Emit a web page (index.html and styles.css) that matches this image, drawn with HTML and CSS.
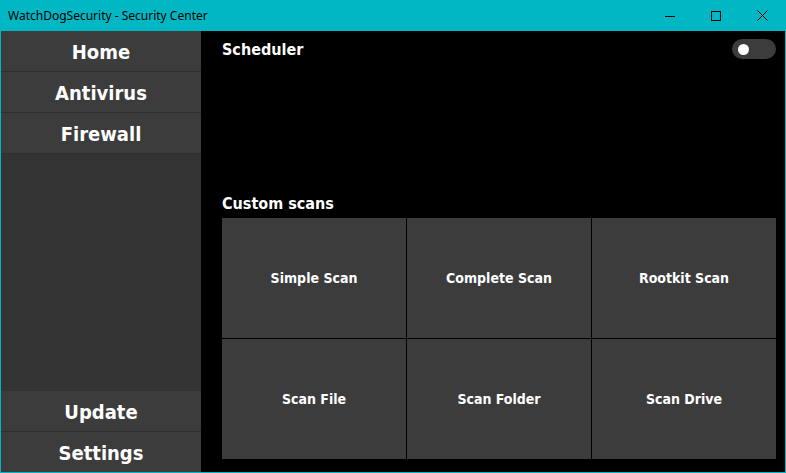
FILE: index.html
```html
<!DOCTYPE html>
<html>
<head>
<meta charset="utf-8">
<link rel="stylesheet" href="styles.css">
</head>
<body>
<div class="window">
  <div class="titlebar">
    <span class="title">WatchDogSecurity - Security Center</span>
    <div class="controls">
      <span class="ctl"><svg width="10" height="10" viewBox="0 0 10 10"><path d="M0 5.5H10" stroke="#000" stroke-width="1"/></svg></span>
      <span class="ctl"><svg width="10" height="10" viewBox="0 0 10 10"><rect x="0.5" y="0.5" width="9" height="9" fill="none" stroke="#000" stroke-width="1"/></svg></span>
      <span class="ctl"><svg width="11" height="11" viewBox="0 0 11 11"><path d="M0.5 0.5L10.5 10.5M10.5 0.5L0.5 10.5" stroke="#000" stroke-width="1"/></svg></span>
    </div>
  </div>
  <div class="main">
    <nav class="sidebar">
      <div class="nav-item">Home</div>
      <div class="nav-item">Antivirus</div>
      <div class="nav-item">Firewall</div>
      <div class="nav-fill"></div>
      <div class="nav-item">Update</div>
      <div class="nav-item last">Settings</div>
    </nav>
    <section class="content">
      <div class="sched-row">
        <h2 class="heading">Scheduler</h2>
        <span class="toggle"><span class="knob"></span></span>
      </div>
      <div class="spacer"></div>
      <h2 class="heading custom">Custom scans</h2>
      <div class="grid">
        <div class="tile">Simple Scan</div>
        <div class="tile">Complete Scan</div>
        <div class="tile">Rootkit Scan</div>
        <div class="tile">Scan File</div>
        <div class="tile">Scan Folder</div>
        <div class="tile">Scan Drive</div>
      </div>
    </section>
  </div>
</div>
</body>
</html>
```

FILE: styles.css
```css
* { box-sizing: border-box; margin: 0; padding: 0; }
html, body { background: #00b7c3; }
body { margin: 0; width: 786px; height: 473px; overflow: hidden; }
.window {
  width: 786px;
  height: 473px;
  display: flex;
  flex-direction: column;
  background: #00b7c3;
  padding: 0 1px 1px 1px;
}
.titlebar {
  height: 31px;
  display: flex;
  align-items: center;
  justify-content: space-between;
  flex: none;
}
.title {
  font-family: "Noto Sans", "Open Sans", sans-serif;
  font-size: 12px;
  color: #000;
  padding-left: 7px;
}
.controls { display: flex; height: 31px; }
.ctl {
  width: 46px;
  height: 31px;
  display: flex;
  align-items: center;
  justify-content: center;
}
.main {
  flex: 1;
  display: flex;
  min-height: 0;
}
.sidebar {
  width: 200px;
  flex: none;
  display: flex;
  flex-direction: column;
  background: #333333;
}
.nav-item {
  height: 41px;
  flex: none;
  background: #3c3c3c;
  border-bottom: 1px solid #2e2e2e;
  color: #fff;
  font-family: "DejaVu Sans", sans-serif;
  font-stretch: condensed;
  font-weight: bold;
  font-size: 20px;
  display: flex;
  align-items: center;
  justify-content: center;
  padding-top: 1px;
}
.nav-item.last { height: 40px; border-bottom: none; }
.nav-fill { flex: 1; background: #333333; }
.content {
  flex: 1;
  background: #000;
  display: flex;
  flex-direction: column;
  padding: 8px 9px 13px 21px;
}
.sched-row {
  display: flex;
  align-items: center;
  justify-content: space-between;
  height: 20px;
}
.heading {
  color: #fff;
  font-family: "DejaVu Sans", sans-serif;
  font-stretch: condensed;
  font-weight: bold;
  font-size: 16px;
  line-height: 20px;
  padding-top: 2px;
}
.toggle {
  width: 44px;
  height: 20px;
  border-radius: 10px;
  background: #3c3c3c;
  display: flex;
  align-items: center;
  padding-left: 6px;
}
.knob {
  width: 11px;
  height: 11px;
  border-radius: 50%;
  background: #fff;
}
.spacer { flex: 1; }
.custom { margin-bottom: 4px; }
.grid {
  display: grid;
  grid-template-columns: repeat(3, 184px);
  grid-template-rows: repeat(2, 120px);
  gap: 1px;
}
.tile {
  background: #3c3c3c;
  color: #fff;
  font-family: "DejaVu Sans", sans-serif;
  font-stretch: condensed;
  font-weight: bold;
  font-size: 14px;
  display: flex;
  align-items: center;
  justify-content: center;
}
```
